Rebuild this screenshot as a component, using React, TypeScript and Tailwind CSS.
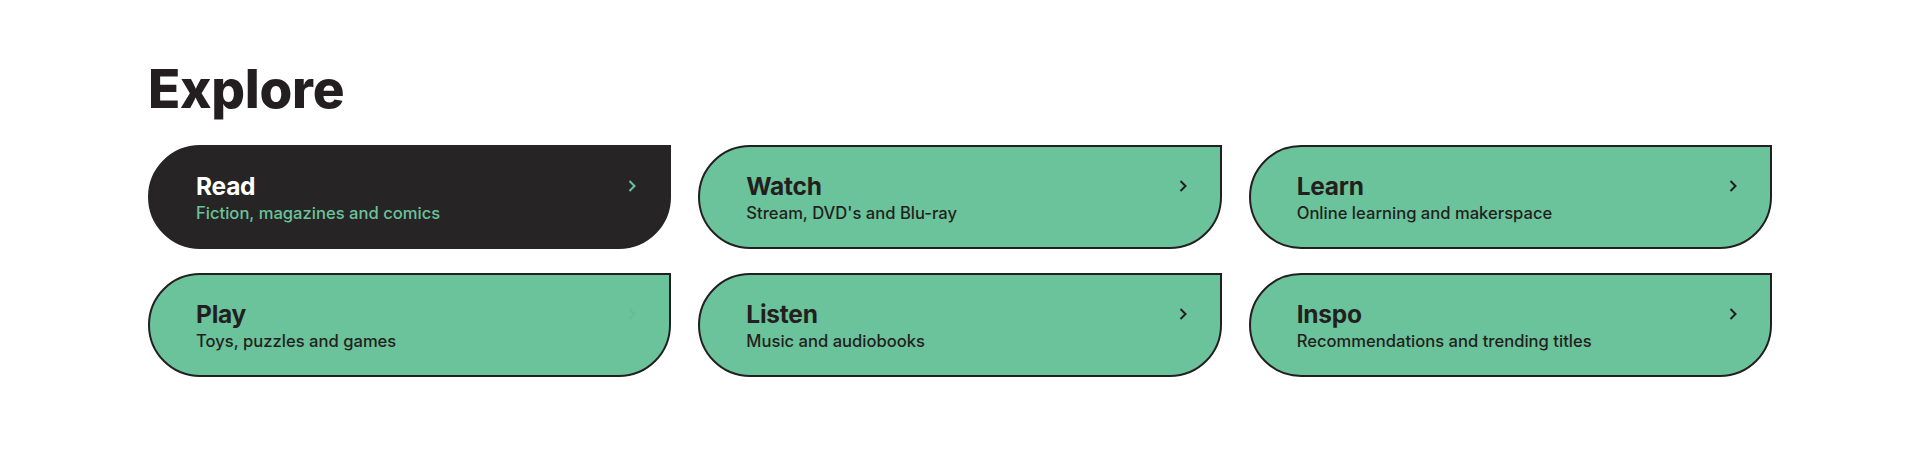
const items = [
  { title: 'Read', sub: 'Fiction, magazines and comics', dark: true },
  { title: 'Watch', sub: "Stream, DVD's and Blu-ray" },
  { title: 'Learn', sub: 'Online learning and makerspace' },
  { title: 'Play', sub: 'Toys, puzzles and games', faint: true },
  { title: 'Listen', sub: 'Music and audiobooks' },
  { title: 'Inspo', sub: 'Recommendations and trending titles' },
];

function Chevron({ className }: { className: string }) {
  return (
    <svg width="10" height="14" viewBox="0 0 10 14" fill="none" className={className}>
      <path d="M2.5 2 L7.5 7 L2.5 12" stroke="currentColor" strokeWidth="2" />
    </svg>
  );
}

export default function App() {
  return (
    <section className="w-full h-[460px] bg-white px-[148px] pt-[63px] font-['Inter',sans-serif]">
      <h2 className="text-[53px] leading-[52px] font-extrabold tracking-[-0.005em] text-[#231f20] mb-[30px]">
        Explore
      </h2>
      <div className="grid grid-cols-3 gap-x-[27px] gap-y-[24px]">
        {items.map((it) => (
          <a
            key={it.title}
            href="#"
            className={
              it.dark
                ? 'h-[104px] flex items-center pl-[46px] pr-[32px] border-2 border-[#262425] bg-[#262425] rounded-[52px] rounded-tr-none'
                : 'h-[104px] flex items-center pl-[46px] pr-[32px] border-2 border-[#231f20] bg-[#6ac39a] rounded-[52px] rounded-tr-none'
            }
          >
            <div className="flex-1 pt-[2px]">
              <div className="flex items-center justify-between">
                <span
                  className={
                    it.dark
                      ? 'text-[24.5px] leading-[28px] font-bold tracking-[-0.01em] text-white'
                      : 'text-[24.5px] leading-[28px] font-bold tracking-[-0.01em] text-[#231f20]'
                  }
                >
                  {it.title}
                </span>
                <Chevron
                  className={
                    it.dark ? 'text-[#6ac39a]' : it.faint ? 'text-[#66bd95]' : 'text-[#231f20]'
                  }
                />
              </div>
              <div
                className={
                  it.dark
                    ? 'mt-[2px] text-[16.6px] leading-[22px] font-medium text-[#6ac39a]'
                    : 'mt-[2px] text-[16.6px] leading-[22px] font-medium text-[#231f20]'
                }
              >
                {it.sub}
              </div>
            </div>
          </a>
        ))}
      </div>
    </section>
  );
}
